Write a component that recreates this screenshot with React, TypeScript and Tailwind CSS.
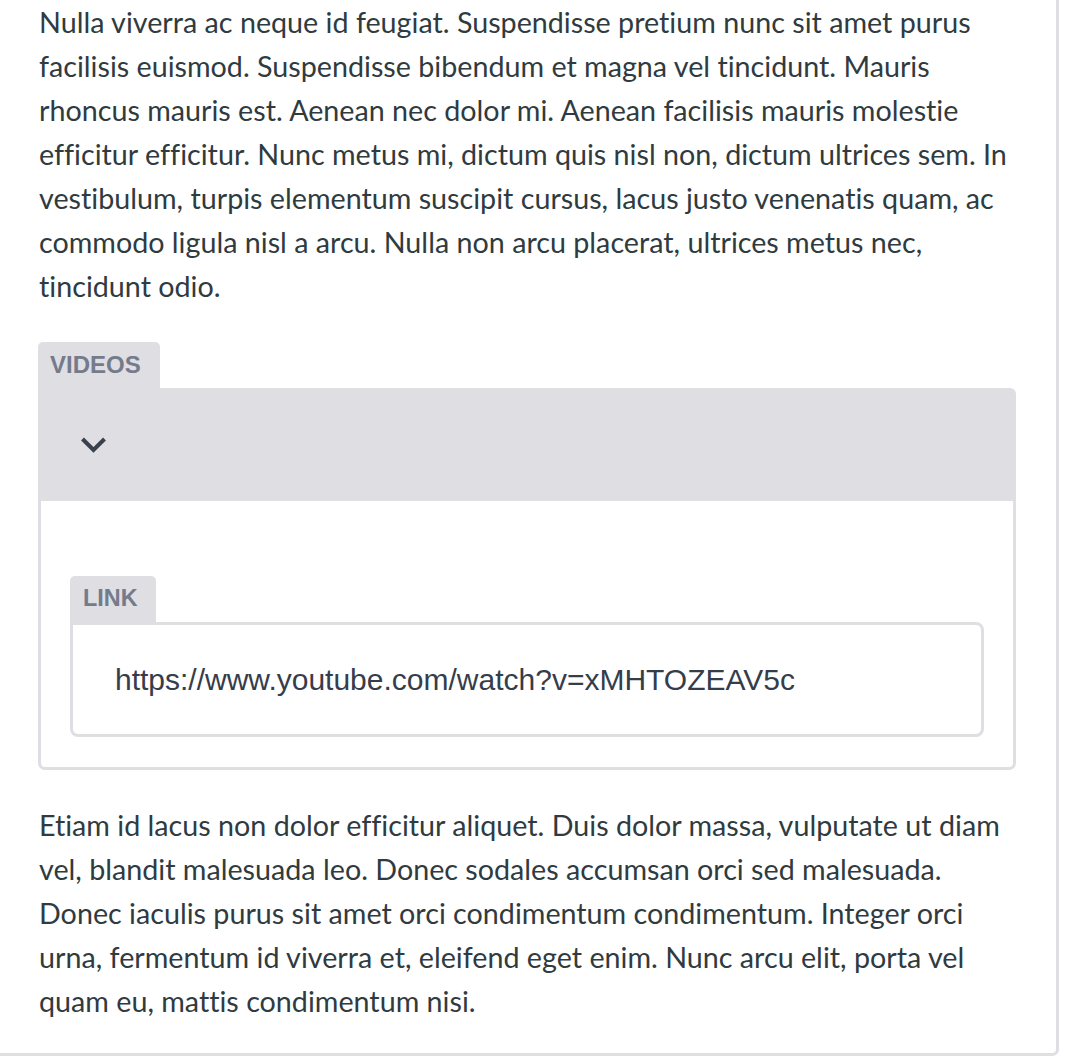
import React from "react";

const p1 = [
  "Nulla viverra ac neque id feugiat. Suspendisse pretium nunc sit amet purus",
  "facilisis euismod. Suspendisse bibendum et magna vel tincidunt. Mauris",
  "rhoncus mauris est. Aenean nec dolor mi. Aenean facilisis mauris molestie",
  "efficitur efficitur. Nunc metus mi, dictum quis nisl non, dictum ultrices sem. In",
  "vestibulum, turpis elementum suscipit cursus, lacus justo venenatis quam, ac",
  "commodo ligula nisl a arcu. Nulla non arcu placerat, ultrices metus nec,",
  "tincidunt odio.",
];

const p2 = [
  "Etiam id lacus non dolor efficitur aliquet. Duis dolor massa, vulputate ut diam",
  "vel, blandit malesuada leo. Donec sodales accumsan orci sed malesuada.",
  "Donec iaculis purus sit amet orci condimentum condimentum. Integer orci",
  "urna, fermentum id viverra et, eleifend eget enim. Nunc arcu elit, porta vel",
  "quam eu, mattis condimentum nisi.",
];

function Para({ lines }: { lines: string[] }) {
  return (
    <div className="text-[28.7px] leading-[44px] text-[#2f3b3f] [font-family:Lato,'Noto_Sans',sans-serif] [font-variant-ligatures:none]">
      {lines.map((l, i) => (
        <span key={i} className="block whitespace-nowrap">
          {l}
        </span>
      ))}
    </div>
  );
}

export default function App() {
  return (
    <div className="w-[1059px] h-[1056px] bg-white border-r-[3px] border-b-[3px] border-[#dedee3] rounded-br-[7px] pl-[39px] pr-[40px]">
      <Para lines={p1} />

      <div className="mt-[34px] w-[978px] -ml-[1px]">
        <div className="flex">
          <div className="w-[122px] h-[46px] bg-[#dedee3] rounded-t-[5px] pl-[12px] flex items-center text-[24px] font-bold text-[#737b8c] [font-family:'Liberation_Sans',Arial,sans-serif]">
            VIDEOS
          </div>
        </div>
        <div className="h-[113px] bg-[#dedee3] rounded-tr-[6px] flex items-center pl-[42px]">
          <svg width="27" height="18" viewBox="0 0 27 18" className="block">
            <polyline
              points="2.5,3 13.5,14 24.5,3"
              fill="none"
              stroke="#3a414d"
              strokeWidth="4"
              strokeLinecap="butt"
              strokeLinejoin="miter"
            />
          </svg>
        </div>
        <div className="border-x-[3px] border-b-[3px] border-[#dedee3] rounded-b-[7px] px-[29px] pt-[75px] pb-[30px]">
          <div className="flex">
            <div className="w-[86px] h-[46px] bg-[#dedee3] rounded-t-[5px] pl-[13px] flex items-center text-[23.4px] font-bold text-[#737b8c] [font-family:'Liberation_Sans',Arial,sans-serif]">
              LINK
            </div>
          </div>
          <div className="h-[115px] border-[3px] border-[#dedee3] rounded-b-[8px] rounded-tr-[8px] flex items-center pl-[42px] text-[30px] text-[#363d4a] [font-family:'Liberation_Sans',Arial,sans-serif]">
            https://www.youtube.com/watch?v=xMHTOZEAV5c
          </div>
        </div>
      </div>

      <div className="mt-[33px]">
        <Para lines={p2} />
      </div>
    </div>
  );
}
